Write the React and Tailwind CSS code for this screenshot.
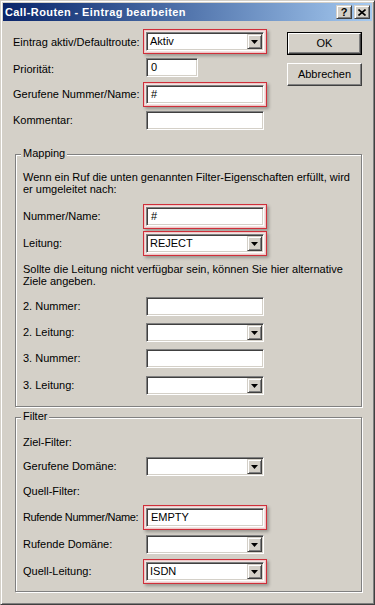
import React from "react";

const SUNKEN =
  "bg-white border border-t-[#808080] border-l-[#808080] border-r-white border-b-white shadow-[inset_1px_1px_0_#404040,inset_-1px_-1px_0_#d4d0c8]";
const RAISED =
  "bg-[#d4d0c8] border border-t-white border-l-white border-r-[#404040] border-b-[#404040] shadow-[inset_-1px_-1px_0_#808080,inset_1px_1px_0_#d4d0c8]";
const RAISED_SMALL =
  "bg-[#d4d0c8] border border-t-[#d4d0c8] border-l-[#d4d0c8] border-r-[#404040] border-b-[#404040] shadow-[inset_1px_1px_0_#ffffff,inset_-1px_-1px_0_#808080]";

function Frame({ hl, w = "w-[124px]", children }) {
  return (
    <div
      className={
        hl
          ? `${w} h-[25px] shrink-0 border border-[#cf2f3a] p-[2px] bg-[#f1e4e3] shadow-[inset_0_0_0_1px_#efc9c9,2px_2px_3px_rgba(0,0,0,0.28)]`
          : `${w} h-[25px] shrink-0 border border-transparent p-[2px]`
      }
    >
      {children}
    </div>
  );
}

function TextBox({ value }) {
  return (
    <div className={`${SUNKEN} w-full h-[19px] flex items-center pl-[4px] leading-[13px]`}>
      {value}
    </div>
  );
}

function Arrow() {
  return (
    <svg width="7" height="4" viewBox="0 0 7 4" className="block">
      <polygon points="0,0 7,0 3.5,4" fill="#000" />
    </svg>
  );
}

function Combo({ value }) {
  return (
    <div className={`${SUNKEN} w-full h-[19px] flex`}>
      <div className="flex-1 flex items-center pl-[3px] leading-[13px]">{value}</div>
      <div className={`${RAISED_SMALL} w-[15px] my-[1px] mr-[1px] flex items-center justify-center`}>
        <Arrow />
      </div>
    </div>
  );
}

function Row({ label, labelW, mt, children, labelClass = "" }) {
  return (
    <div className={`flex items-center ${mt}`}>
      <div className={`${labelW} shrink-0 leading-[13px] whitespace-nowrap ${labelClass}`}>{label}</div>
      {children}
    </div>
  );
}

function Group({ title, mt, className, children }) {
  return (
    <div
      className={`relative ${mt} ml-[2px] w-[347px] border border-[#808080] shadow-[inset_1px_1px_0_#ffffff,1px_1px_0_#ffffff] pl-[7px] ${className}`}
    >
      <div className="absolute -top-[8px] left-[5px] px-[2px] bg-[#d4d0c8] leading-[13px]">{title}</div>
      {children}
    </div>
  );
}

function Button({ children, def }) {
  if (def) {
    return (
      <div className="w-[75px] h-[23px] border border-black">
        <div className={`${RAISED} w-full h-full flex items-center justify-center leading-[13px]`}>
          {children}
        </div>
      </div>
    );
  }
  return (
    <div className={`${RAISED} w-[75px] h-[23px] flex items-center justify-center leading-[13px]`}>
      {children}
    </div>
  );
}

export default function App() {
  return (
    <div className="w-[375px] h-[605px] bg-[#d4d0c8] border border-t-[#d4d0c8] border-l-[#d4d0c8] border-r-[#404040] border-b-[#404040] shadow-[inset_1px_1px_0_#ffffff,inset_-1px_-1px_0_#808080] p-[2px] flex flex-col text-[11px] text-black font-['Liberation_Sans',Arial,sans-serif] overflow-hidden">
      {/* Title bar */}
      <div className="h-[18px] shrink-0 bg-linear-to-r from-[#0a246a] to-[#a6caf0] flex items-center pl-[2px] pr-[2px]">
        <div className="flex-1 text-white font-bold tracking-[0.4px] leading-[13px] whitespace-nowrap">
          Call-Routen - Eintrag bearbeiten
        </div>
        <div className={`${RAISED_SMALL} w-[16px] h-[14px] flex items-center justify-center font-bold text-[11px] leading-[11px]`}>
          ?
        </div>
        <div className={`${RAISED_SMALL} w-[16px] h-[14px] ml-[2px] flex items-center justify-center`}>
          <svg width="8" height="7" viewBox="0 0 8 7" className="block">
            <path d="M0.5 0.5 L7.5 6.5 M7.5 0.5 L0.5 6.5" stroke="#000" strokeWidth="1.6" />
          </svg>
        </div>
      </div>

      {/* Body */}
      <div className="flex-1 pl-[10px]">
        <div className="flex pt-[8px]">
          <div className="w-[254px] flex flex-col">
            <Row label="Eintrag aktiv/Defaultroute:" labelW="w-[130px]" mt="mt-0" labelClass="pt-[2px]">
              <Frame hl>
                <Combo value="Aktiv" />
              </Frame>
            </Row>
            <Row label="Priorität:" labelW="w-[130px]" mt="mt-[1px]" labelClass="pt-[3px]">
              <Frame w="w-[58px]">
                <TextBox value="0" />
              </Frame>
            </Row>
            <Row label="Gerufene Nummer/Name:" labelW="w-[130px]" mt="mt-[2px]">
              <Frame hl>
                <TextBox value="#" />
              </Frame>
            </Row>
            <Row label="Kommentar:" labelW="w-[130px]" mt="mt-[1px]">
              <Frame>
                <TextBox value="" />
              </Frame>
            </Row>
          </div>
          <div className="ml-[20px] pt-[3px] flex flex-col gap-[8px]">
            <Button def>OK</Button>
            <Button>Abbrechen</Button>
          </div>
        </div>

        <Group title="Mapping" mt="mt-[21px]" className="pt-[16px] pb-[8px]">
          <p className="leading-[12px]">
            Wenn ein Ruf die unten genannten Filter-Eigenschaften erfüllt, wird
            <br />
            er umgeleitet nach:
          </p>
          <Row label="Nummer/Name:" labelW="w-[120px]" mt="mt-[9px]">
            <Frame hl>
              <TextBox value="#" />
            </Frame>
          </Row>
          <Row label="Leitung:" labelW="w-[120px]" mt="mt-[2px]">
            <Frame hl>
              <Combo value="REJECT" />
            </Frame>
          </Row>
          <p className="leading-[12px] mt-[7px]">
            Sollte die Leitung nicht verfügbar sein, können Sie hier alternative
            <br />
            Ziele angeben.
          </p>
          <Row label="2. Nummer:" labelW="w-[120px]" mt="mt-[7px]">
            <Frame>
              <TextBox value="" />
            </Frame>
          </Row>
          <Row label="2. Leitung:" labelW="w-[120px]" mt="mt-[1px]">
            <Frame>
              <Combo value="" />
            </Frame>
          </Row>
          <Row label="3. Nummer:" labelW="w-[120px]" mt="mt-[1px]">
            <Frame>
              <TextBox value="" />
            </Frame>
          </Row>
          <Row label="3. Leitung:" labelW="w-[120px]" mt="mt-[2px]">
            <Frame>
              <Combo value="" />
            </Frame>
          </Row>
        </Group>

        <Group title="Filter" mt="mt-[10px]" className="pt-[18px] pb-[7px]">
          <div className="leading-[13px]">Ziel-Filter:</div>
          <Row label="Gerufene Domäne:" labelW="w-[120px]" mt="mt-[5px]">
            <Frame>
              <Combo value="" />
            </Frame>
          </Row>
          <div className="leading-[13px] mt-[6px]">Quell-Filter:</div>
          <Row label="Rufende Nummer/Name:" labelW="w-[120px]" mt="mt-[7px]" labelClass="tracking-[-0.35px]">
            <Frame hl>
              <TextBox value="EMPTY" />
            </Frame>
          </Row>
          <Row label="Rufende Domäne:" labelW="w-[120px]" mt="mt-[2px]">
            <Frame>
              <Combo value="" />
            </Frame>
          </Row>
          <Row label="Quell-Leitung:" labelW="w-[120px]" mt="mt-[2px]">
            <Frame hl>
              <Combo value="ISDN" />
            </Frame>
          </Row>
        </Group>
      </div>
    </div>
  );
}
